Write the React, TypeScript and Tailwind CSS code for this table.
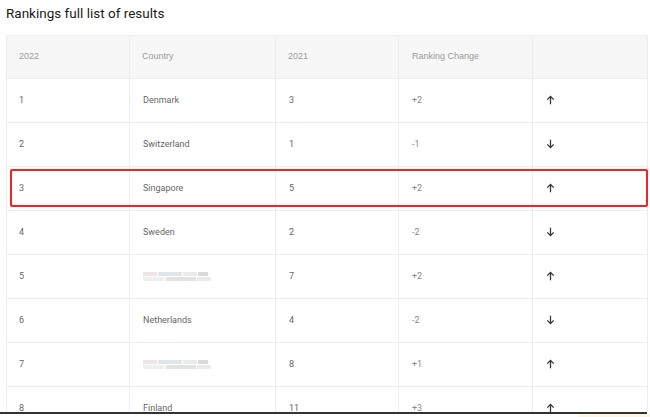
const rows: { rank: string; country: string; blurred?: boolean; prev: string; change: string; up: boolean }[] = [
  { rank: "1", country: "Denmark", prev: "3", change: "+2", up: true },
  { rank: "2", country: "Switzerland", prev: "1", change: "-1", up: false },
  { rank: "3", country: "Singapore", prev: "5", change: "+2", up: true },
  { rank: "4", country: "Sweden", prev: "2", change: "-2", up: false },
  { rank: "5", country: "", blurred: true, prev: "7", change: "+2", up: true },
  { rank: "6", country: "Netherlands", prev: "4", change: "-2", up: false },
  { rank: "7", country: "", blurred: true, prev: "8", change: "+1", up: true },
  { rank: "8", country: "Finland", prev: "11", change: "+3", up: true },
]

const cols = "grid grid-cols-[123px_146px_123px_134px_115px]"

function Arrow({ up }: { up: boolean }) {
  return (
    <svg width="9" height="10" viewBox="0 0 9 10" className={up ? "-mt-[2px]" : "-mt-[1px] rotate-180"}>
      <path d="M4.5 1.3V9.3M1.3 4.6L4.5 1.3L7.7 4.6" fill="none" stroke="#333" strokeWidth="1.25" />
    </svg>
  )
}

function Blur() {
  return (
    <div className="flex flex-col gap-[1px] opacity-80">
      <div className="flex gap-[1px]">
        <div className="h-[4px] w-[14px] bg-[#eadede]" />
        <div className="h-[4px] w-[24px] bg-[#d8e0e6]" />
        <div className="h-[4px] w-[14px] bg-[#e5e5e5]" />
        <div className="h-[4px] w-[10px] bg-[#d2d2d2]" />
      </div>
      <div className="flex gap-[1px]">
        <div className="h-[4px] w-[22px] bg-[#ececec]" />
        <div className="h-[4px] w-[30px] bg-[#dcdcdc]" />
        <div className="h-[4px] w-[14px] bg-[#e6e6e6]" />
      </div>
    </div>
  )
}

export default function App() {
  return (
    <div className="flex h-[417px] w-[650px] flex-col overflow-hidden bg-white">
      <div className="h-[412px] overflow-hidden pl-[6px]">
        <h2 className="pt-[4px] font-['Roboto',sans-serif] text-[13.5px] leading-[18px] font-normal text-[#1a1a1a]">
          Rankings full list of results
        </h2>
        <div className="mt-[13px] w-[641px] border-t border-l border-[#ededed] font-['Liberation_Sans',sans-serif] text-[9px]">
          <div className={`${cols} h-[43px] items-center bg-[#f7f7f7] text-[#9a9a9a]`}>
            <div className="flex h-full items-center border-r border-b border-[#ededed] pl-[12px]">2022</div>
            <div className="flex h-full items-center border-r border-b border-[#ededed] pl-[12px]">Country</div>
            <div className="flex h-full items-center border-r border-b border-[#ededed] pl-[12px]">2021</div>
            <div className="flex h-full items-center border-r border-b border-[#ededed] pl-[13px]">Ranking Change</div>
            <div className="flex h-full items-center border-r border-b border-[#ededed]" />
          </div>
          {rows.map((r) => (
            <div key={r.rank} className="relative">
              <div className={`${cols} h-[44px] font-['Roboto',sans-serif] text-[9px] text-[#666]`}>
                <div className="flex items-center border-r border-b border-[#ededed] pl-[12px]">{r.rank}</div>
                <div className="flex items-center border-r border-b border-[#ededed] pl-[13px]">
                  {r.blurred ? <Blur /> : r.country}
                </div>
                <div className="flex items-center border-r border-b border-[#ededed] pl-[13px]">{r.prev}</div>
                <div className="flex items-center border-r border-b border-[#ededed] pl-[13px] text-[#888]">{r.change}</div>
                <div className="flex items-center border-r border-b border-[#ededed] pl-[13px]">
                  <Arrow up={r.up} />
                </div>
              </div>
              {r.rank === "3" && (
                <div className="pointer-events-none absolute top-[2px] left-[3px] h-[38px] w-[638px] rounded-[2px] border-2 border-[#f52222]" />
              )}
            </div>
          ))}
        </div>
      </div>
      <div className="h-[2px] w-[647px] bg-[#333]" />
      <div className="flex h-[3px]">
        <div className="w-[578px] bg-white" />
        <div className="flex-1 bg-[#fbf6e6]" />
      </div>
    </div>
  )
}
